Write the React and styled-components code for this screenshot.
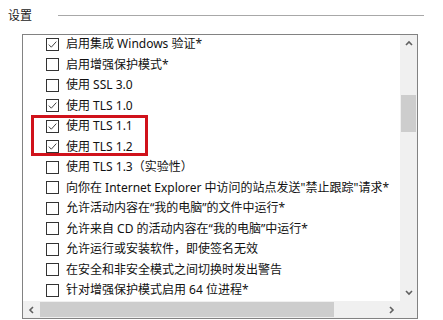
import React from "react";
import styled, { createGlobalStyle } from "styled-components";

const Global = createGlobalStyle`
  html, body { margin: 0; padding: 0; background: #ffffff; }
  body { font-family: "Noto Sans", "Noto Sans CJK SC", sans-serif; color: #000; overflow: hidden; }
`;

const Page = styled.div`
  width: 443px;
  height: 320px;
  overflow: hidden;
  position: relative;
`;

const Header = styled.div`
  display: flex;
  align-items: center;
  height: 30px;
  padding-left: 8px;
  padding-right: 19px;
`;

const Title = styled.span`
  font-size: 12px;
  line-height: 14px;
  color: #1a1a1a;
  margin-top: 1px;
`;

const Rule = styled.div`
  flex: 1;
  height: 1px;
  background: #a8a8a8;
  margin-left: 26px;
`;

const Box = styled.div`
  margin-top: 4px;
  margin-left: 22px;
  width: 394px;
  height: 283px;
  border: 1px solid #828282;
  display: grid;
  grid-template-columns: 1fr 17px;
  grid-template-rows: 1fr 17px;
  position: relative;
`;

const Viewport = styled.div`
  overflow: hidden;
  position: relative;
`;

const List = styled.div`
  margin-top: -1px;
  display: flex;
  flex-direction: column;
`;

const Row = styled.div`
  height: 20.5px;
  display: flex;
  align-items: center;
  padding-left: 23px;
  white-space: nowrap;
`;

const Check = styled.span`
  width: 11px;
  height: 11px;
  border: 1px solid #333;
  background: #fff;
  display: inline-flex;
  align-items: center;
  justify-content: center;
  flex: none;
`;

const Label = styled.span`
  margin-left: 7px;
  font-size: 12px;
  line-height: 16px;
  color: #111;
`;

const VBar = styled.div`
  background: #f0f0f0;
  display: flex;
  flex-direction: column;
  position: relative;
`;

const ArrowBtn = styled.div`
  width: 17px;
  height: 17px;
  display: flex;
  align-items: center;
  justify-content: center;
  flex: none;
`;

const VTrack = styled.div`
  flex: 1;
  position: relative;
`;

const VThumb = styled.div`
  position: absolute;
  left: 1px;
  right: 1px;
  background: #cdcdcd;
`;

const HBar = styled.div`
  background: #f0f0f0;
  display: flex;
  align-items: center;
`;

const HTrack = styled.div`
  flex: 1;
  height: 17px;
  position: relative;
`;

const HThumb = styled.div`
  position: absolute;
  top: 1px;
  bottom: 1px;
  background: #cdcdcd;
`;

const Corner = styled.div`
  background: #f0f0f0;
`;

const Highlight = styled.div`
  position: absolute;
  left: 8px;
  top: 80px;
  width: 111px;
  height: 35px;
  border: 3px solid #d0121b;
  pointer-events: none;
`;

const CheckMark = () => (
  <svg width="11" height="11" viewBox="0 0 11 11">
    <polyline points="1.8,5.6 4.3,8.2 9.3,2.6" fill="none" stroke="#444" strokeWidth="1" />
  </svg>
);

const Chevron = ({ dir }) => {
  const pts = {
    up: "1,5 4,2 7,5",
    down: "1,2 4,5 7,2",
    left: "5,1 2,4 5,7",
    right: "2,1 5,4 2,7",
  }[dir];
  return (
    <svg width="8" height="8" viewBox="0 0 8 8">
      <polyline points={pts} fill="none" stroke="#606060" strokeWidth="1.6" />
    </svg>
  );
};

const items = [
  [true, "启用集成 Windows 验证*"],
  [false, "启用增强保护模式*"],
  [false, "使用 SSL 3.0"],
  [true, "使用 TLS 1.0"],
  [true, "使用 TLS 1.1"],
  [true, "使用 TLS 1.2"],
  [false, "使用 TLS 1.3（实验性）"],
  [false, "向你在 Internet Explorer 中访问的站点发送\"禁止跟踪\"请求*"],
  [false, "允许活动内容在“我的电脑”的文件中运行*"],
  [false, "允许来自 CD 的活动内容在“我的电脑”中运行*"],
  [false, "允许运行或安装软件，即使签名无效"],
  [false, "在安全和非安全模式之间切换时发出警告"],
  [false, "针对增强保护模式启用 64 位进程*"],
  [false, "阻止混合内容的显示和安全设置"],
];

export default function App() {
  return (
    <Page>
      <Global />
      <Header>
        <Title>设置</Title>
        <Rule />
      </Header>
      <Box>
        <Viewport>
          <List>
            {items.map(([checked, text], i) => (
              <Row key={i}>
                <Check>{checked && <CheckMark />}</Check>
                <Label>{text}</Label>
              </Row>
            ))}
          </List>
          <Highlight />
        </Viewport>
        <VBar>
          <ArrowBtn>
            <Chevron dir="up" />
          </ArrowBtn>
          <VTrack>
            <VThumb style={{ top: "43px", height: "37px" }} />
          </VTrack>
          <ArrowBtn>
            <Chevron dir="down" />
          </ArrowBtn>
        </VBar>
        <HBar>
          <ArrowBtn>
            <Chevron dir="left" />
          </ArrowBtn>
          <HTrack>
            <HThumb style={{ left: "0px", width: "294px" }} />
          </HTrack>
          <ArrowBtn>
            <Chevron dir="right" />
          </ArrowBtn>
        </HBar>
        <Corner />
      </Box>
    </Page>
  );
}
